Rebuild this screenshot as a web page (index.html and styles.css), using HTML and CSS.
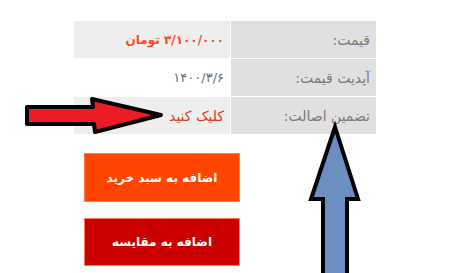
FILE: index.html
```html
<!DOCTYPE html>
<html lang="fa">
<head>
<meta charset="utf-8">
<link rel="stylesheet" href="styles.css">
</head>
<body>
<div class="page">
  <div class="specs" dir="rtl">
    <div class="label">قیمت:</div>
    <div class="value price">۳/۱۰۰/۰۰۰ تومان</div>
    <div class="label">آپدیت قیمت:</div>
    <div class="value date">۱۴۰۰/۳/۶</div>
    <div class="label">تضمین اصالت:</div>
    <div class="value link">کلیک کنید</div>
  </div>
  <div class="actions" dir="rtl">
    <button class="btn cart">اضافه به سبد خرید</button>
    <button class="btn compare">اضافه به مقایسه</button>
  </div>
  <svg class="arrows" width="460" height="273" viewBox="0 0 460 273">
    <polygon points="27,107 93,107 92,99 161,115 95,132 94,124 27,124" fill="#ed1c24" stroke="#000" stroke-width="4" stroke-linejoin="round"/>
    <polygon points="335,127 358,199 347,199 347,280 323,280 323,199 311,199" fill="#6a8fc0" stroke="#000" stroke-width="4" stroke-linejoin="miter"/>
  </svg>
</div>
</body>
</html>
```
FILE: styles.css
```css
html, body {
  margin: 0;
  padding: 0;
  background: #fff;
}
.page {
  position: relative;
  width: 460px;
  height: 273px;
  overflow: hidden;
  font-family: "DejaVu Sans", sans-serif;
}
.specs {
  position: relative;
  top: 21px;
  margin-left: 74px;
  width: 302px;
  display: grid;
  grid-template-columns: 145px 156px;
  grid-template-rows: 37px 37px 37px;
  gap: 1px;
  background: #fff;
}
.specs .label,
.specs .value {
  display: flex;
  align-items: center;
  padding: 0 6px;
}
.label {
  background: #e0e0e0;
  color: #7a7a7a;
  font-size: 14px;
}
.value {
  background: #eeeeee;
}
.value.date {
  background: #fff;
  color: #6e6e6e;
  font-size: 13px;
}
.value.price {
  color: #ff4a1a;
  font-weight: bold;
  font-size: 12px;
}
.value.link {
  color: #d8401c;
  font-size: 14px;
}
.actions {
  margin-top: 40px;
  margin-left: 84px;
  width: 156px;
  display: flex;
  flex-direction: column;
  gap: 16px;
}
.btn {
  width: 156px;
  height: 49px;
  border: 1px solid #ff7a50;
  color: #fff;
  font-family: "DejaVu Sans", sans-serif;
  font-weight: bold;
  font-size: 12px;
  padding: 0;
}
.btn.cart {
  background: #ff4500;
}
.btn.compare {
  background: #cc0000;
  height: 48px;
}
.arrows {
  position: absolute;
  left: 0;
  top: 0;
  pointer-events: none;
}
```
